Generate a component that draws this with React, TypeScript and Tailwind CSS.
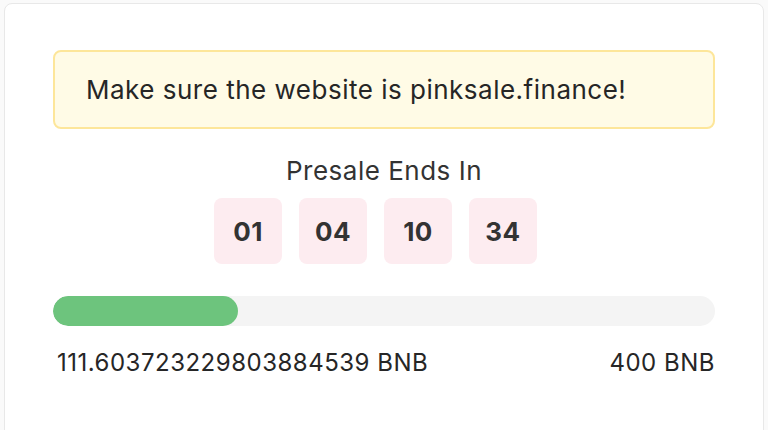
const countdown = ["01", "04", "10", "34"];

const raised = "111.603723229803884539";
const hardCap = 400;

export default function App() {
  const pct = Math.min((parseFloat(raised) / hardCap) * 100, 100);

  return (
    <div
      className="min-h-screen bg-[#fafafa] px-[4px] pt-[3px] text-[#262626]"
      style={{ fontFamily: "Inter, 'Noto Sans', sans-serif" }}
    >
      <div className="h-[440px] rounded-[8px] border border-[#e8e8e8] bg-white px-[48px] pt-[46px]">
        <div className="flex h-[79px] items-center rounded-[8px] border-2 border-[#fde69a] bg-[#fffbe6] pl-[31px] text-[26px] tracking-[0.5px]">
          Make sure the website is pinksale.finance!
        </div>

        <div className="mt-[24px] text-center text-[26px] leading-[36px] tracking-[0.5px] text-[#333]">
          Presale Ends In
        </div>
        <div className="mt-[9px] flex justify-center">
          {countdown.map((n, i) => (
            <div
              key={i}
              className="mr-[17px] flex h-[66px] w-[68px] items-center justify-center rounded-[8px] bg-[#fdecf0] text-[26px] font-bold tracking-[0.5px] text-[#333]"
            >
              {n}
            </div>
          ))}
        </div>

        <div className="mt-[32px] h-[30px] w-full overflow-hidden rounded-full bg-[#f4f4f4]">
          <div
            className="h-full rounded-full bg-[#6dc47d]"
            style={{ width: `${pct}%` }}
          />
        </div>
        <div className="mt-[19px] flex justify-between pl-[4px] text-[24px] leading-[36px] tracking-[0.5px] text-[#262626]">
          <span>{raised} BNB</span>
          <span>{hardCap} BNB</span>
        </div>
      </div>
    </div>
  );
}
